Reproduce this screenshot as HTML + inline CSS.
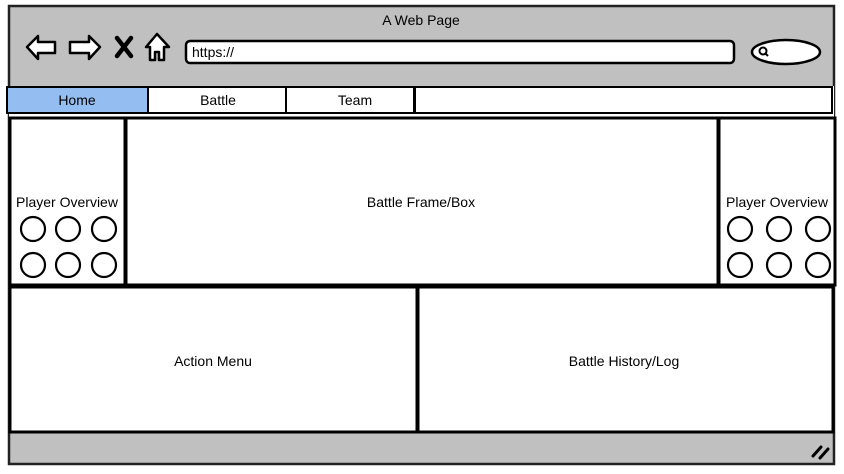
<!DOCTYPE html>
<html><head><style>
html,body{margin:0;padding:0;background:#fff;width:844px;height:474px;overflow:hidden}
svg{display:block}
text{font-family:"Liberation Sans",sans-serif;font-size:14px;fill:#000}
</style></head><body>
<svg width="844" height="474" viewBox="0 0 844 474">
<rect width="844" height="474" fill="#fff"/>
<!-- browser frame -->
<rect x="9" y="6" width="825" height="458" fill="#c0c0c0" stroke="#222" stroke-width="2.5"/>
<rect x="9" y="86" width="825" height="346" fill="#fff"/>
<text x="421" y="25" text-anchor="middle">A Web Page</text>
<!-- nav icons -->
<g fill="#fff" stroke="#000" stroke-width="2.5" stroke-linejoin="round">
<path d="M27 47 L38 36 L38 42 L55 42 L55 53 L38 53 L38 59 Z"/>
<path d="M100 47 L89 36 L89 42 L70 42 L70 53 L89 53 L89 59 Z"/>
<path d="M146 47 L157 34 L169 47 L164 47 L164 60 L159 60 L159 52 L155 52 L155 60 L150 60 L150 47 Z"/>
</g>
<path d="M117 38 L131 56 M131 38 L117 56" stroke="#000" stroke-width="4.5" stroke-linecap="round"/>
<rect x="186" y="41" width="548" height="22" rx="4" fill="#fff" stroke="#000" stroke-width="2.5"/>
<text x="192" y="57">https://</text>
<ellipse cx="786" cy="52" rx="34" ry="12" fill="#fff" stroke="#000" stroke-width="2.5"/>
<circle cx="763" cy="51" r="3.5" fill="none" stroke="#000" stroke-width="2"/>
<path d="M765 53 L768 56" stroke="#000" stroke-width="2"/>
<!-- tabs -->
<rect x="7" y="87" width="141" height="26" fill="#94bdf1" stroke="#000" stroke-width="2"/>
<rect x="148" y="87" width="138" height="26" fill="#fff" stroke="#000" stroke-width="2"/>
<rect x="286" y="87" width="128" height="26" fill="#fff" stroke="#000" stroke-width="2"/>
<rect x="415" y="87" width="417" height="26" fill="#fff" stroke="#000" stroke-width="2"/>
<text x="77" y="105" text-anchor="middle">Home</text>
<text x="218" y="105" text-anchor="middle">Battle</text>
<text x="355" y="105" text-anchor="middle">Team</text>
<!-- panels -->
<g fill="#fff" stroke="#000" stroke-width="3">
<rect x="10" y="118" width="115" height="167"/>
<rect x="126" y="118" width="592" height="167"/>
<rect x="719" y="118" width="116" height="167"/>
<rect x="10" y="287" width="407" height="145"/>
<rect x="418" y="287" width="415" height="145"/>
</g>
<text x="67" y="207" text-anchor="middle">Player Overview</text>
<text x="421" y="207" text-anchor="middle">Battle Frame/Box</text>
<text x="777" y="207" text-anchor="middle">Player Overview</text>
<text x="213" y="366" text-anchor="middle">Action Menu</text>
<text x="624" y="366" text-anchor="middle">Battle History/Log</text>
<g fill="none" stroke="#000" stroke-width="2.2">
<circle cx="33" cy="229" r="12"/><circle cx="68" cy="229" r="12"/><circle cx="104" cy="229" r="12"/>
<circle cx="33" cy="265" r="12"/><circle cx="68" cy="265" r="12"/><circle cx="104" cy="265" r="12"/>
<circle cx="740" cy="229" r="12"/><circle cx="779" cy="229" r="12"/><circle cx="818" cy="229" r="12"/>
<circle cx="740" cy="265" r="12"/><circle cx="779" cy="265" r="12"/><circle cx="818" cy="265" r="12"/>
</g>
<path d="M813 456 L821 447 M820 458 L828 449" stroke="#000" stroke-width="3" stroke-linecap="round"/>
</svg>
</body></html>
